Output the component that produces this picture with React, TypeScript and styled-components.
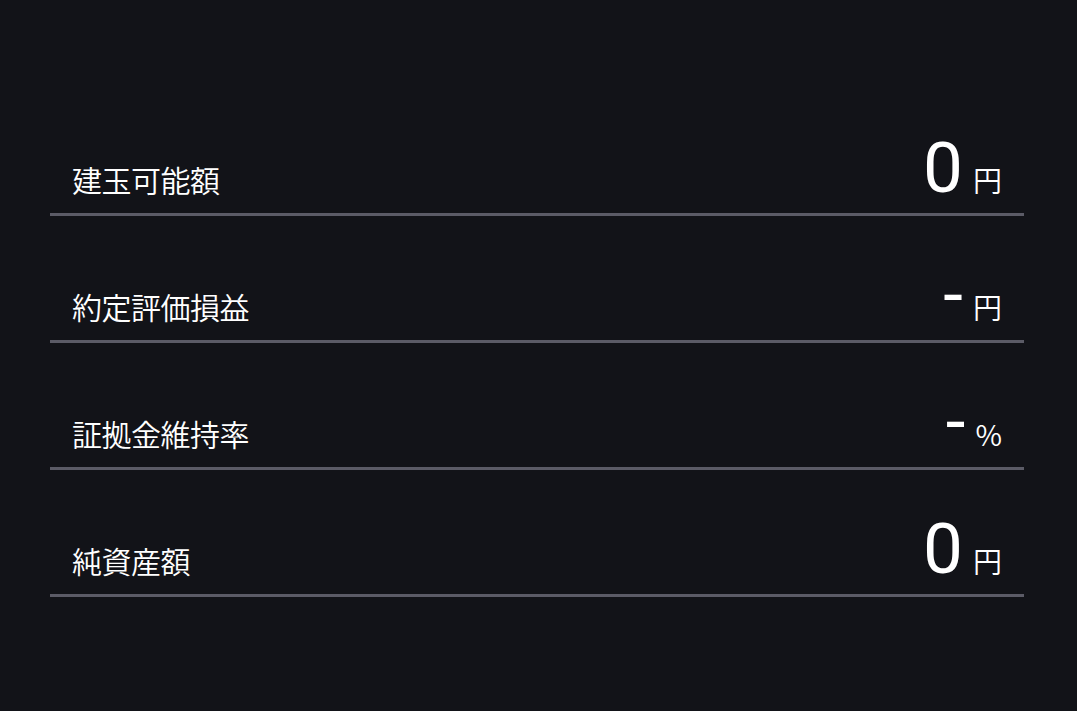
import React from "react";
import styled, { createGlobalStyle } from "styled-components";

const GlobalStyle = createGlobalStyle`
  html, body {
    margin: 0;
    padding: 0;
    background: #121318;
  }
  body {
    font-family: "Noto Sans CJK JP", "Noto Sans", sans-serif;
    color: #ffffff;
  }
`;

type Item = { label: string; value: string; unit: string };

const items: Item[] = [
  { label: "建玉可能額", value: "0", unit: "円" },
  { label: "約定評価損益", value: "-", unit: "円" },
  { label: "証拠金維持率", value: "-", unit: "%" },
  { label: "純資産額", value: "0", unit: "円" },
];

const App: React.FC = () => {
  return (
    <>
      <GlobalStyle />
      <Page>
        <List>
          {items.map((it) => (
            <Row key={it.label}>
              <Label>{it.label}</Label>
              <ValueBox>
                <Value>{it.value}</Value>
                <Unit>{it.unit}</Unit>
              </ValueBox>
            </Row>
          ))}
        </List>
      </Page>
    </>
  );
};

export default App;

const Page = styled.div`
  width: 1077px;
  height: 711px;
  background: #121318;
  padding: 89px 53px 0 50px;
  box-sizing: border-box;
`;

const List = styled.div`
  display: flex;
  flex-direction: column;
`;

const Row = styled.div`
  height: 127px;
  box-sizing: border-box;
  display: flex;
  align-items: flex-end;
  justify-content: space-between;
  padding: 0 22px 14px 22px;
  border-bottom: 3px solid #5b5b66;
`;

const Label = styled.div`
  font-size: 30px;
  font-weight: 350;
  line-height: 40px;
  letter-spacing: -0.5px;
`;

const ValueBox = styled.div`
  display: flex;
  align-items: baseline;
  gap: 10px;
  line-height: 40px;
`;

const Value = styled.span`
  font-family: Roboto, "Noto Sans", sans-serif;
  font-size: 71px;
`;

const Unit = styled.span`
  font-size: 29px;
  font-weight: 350;
`;
